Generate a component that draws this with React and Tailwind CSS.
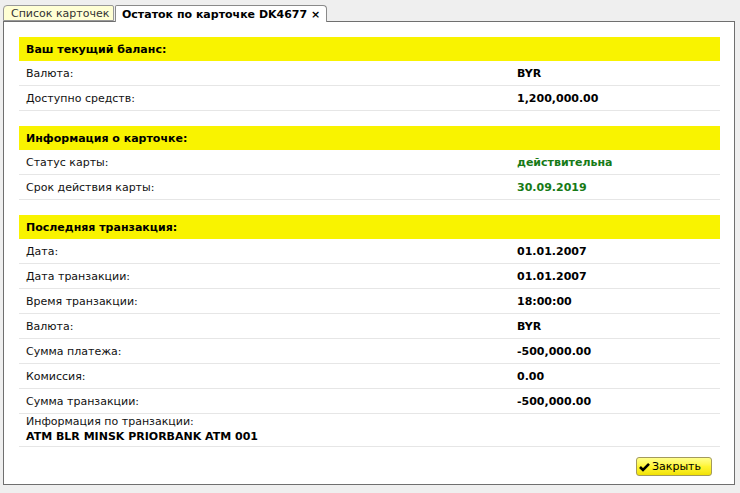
import React from "react";

const font = { fontFamily: '"DejaVu Sans", "Liberation Sans", sans-serif' };

function Header({ children }) {
  return (
    <div className="h-[24px] bg-[#f9f300] flex items-center pl-[7px] font-bold text-black">
      {children}
    </div>
  );
}

function Row({ label, value, green }) {
  return (
    <div className="h-[25px] border-b border-[#e6e6e6] flex items-center">
      <div className="w-[498px] pl-[7px] text-[#111]">{label}</div>
      <div className={green ? "font-bold text-[#177a17]" : "font-bold text-black"}>{value}</div>
    </div>
  );
}

export default function App() {
  return (
    <div
      className="w-[740px] h-[493px] bg-[#efefef] pt-[5px] pl-[3px] text-[11px] leading-[15px] overflow-hidden"
      style={font}
    >
      <div className="flex items-end h-[16px] relative z-10">
        <div className="h-[16px] w-[111px] bg-[#ffffd4] border border-[#999] rounded-tl-[4px] rounded-tr-[2px] flex items-center pl-[7px] text-[#333] whitespace-nowrap">
          Список карточек
        </div>
        <div className="h-[17px] w-[212px] ml-[1px] mb-[-1px] bg-white border border-b-0 border-[#8a8a8a] rounded-tl-[2px] rounded-tr-[4px] flex items-center pl-[6px] font-bold text-black self-start whitespace-nowrap">
          Остаток по карточке DK4677 ×
        </div>
      </div>
      <div className="w-[732px] h-[464px] bg-white border border-[#6f6f6f] pt-[15px] pl-[15px] pr-[14px]">
        <Header>Ваш текущий баланс:</Header>
        <Row label="Валюта:" value="BYR" />
        <Row label="Доступно средств:" value="1,200,000.00" />
        <div className="h-[15px]" />
        <Header>Информация о карточке:</Header>
        <Row label="Статус карты:" value="действительна" green />
        <Row label="Срок действия карты:" value="30.09.2019" green />
        <div className="h-[15px]" />
        <Header>Последняя транзакция:</Header>
        <Row label="Дата:" value="01.01.2007" />
        <Row label="Дата транзакции:" value="01.01.2007" />
        <Row label="Время транзакции:" value="18:00:00" />
        <Row label="Валюта:" value="BYR" />
        <Row label="Сумма платежа:" value="-500,000.00" />
        <Row label="Комиссия:" value="0.00" />
        <Row label="Сумма транзакции:" value="-500,000.00" />
        <div className="h-[33px] border-b border-[#e6e6e6] pl-[7px]">
          <div className="text-[#111]">Информация по транзакции:</div>
          <div className="font-bold text-black">ATM BLR MINSK PRIORBANK ATM 001</div>
        </div>
        <div className="flex justify-end pr-[8px] mt-[10px]">
          <button className="h-[19px] w-[76px] rounded-[3px] border border-[#a39a5c] bg-gradient-to-b from-[#ffff8a] via-[#fff530] to-[#f2e200] flex items-center pl-[2px] gap-[2px] text-black whitespace-nowrap">
            <svg width="11" height="10" viewBox="0 0 11 10">
              <path d="M1 5 L4 8 L10 1.8" fill="none" stroke="#000" strokeWidth="2.6" />
            </svg>
            <span>Закрыть</span>
          </button>
        </div>
      </div>
    </div>
  );
}
